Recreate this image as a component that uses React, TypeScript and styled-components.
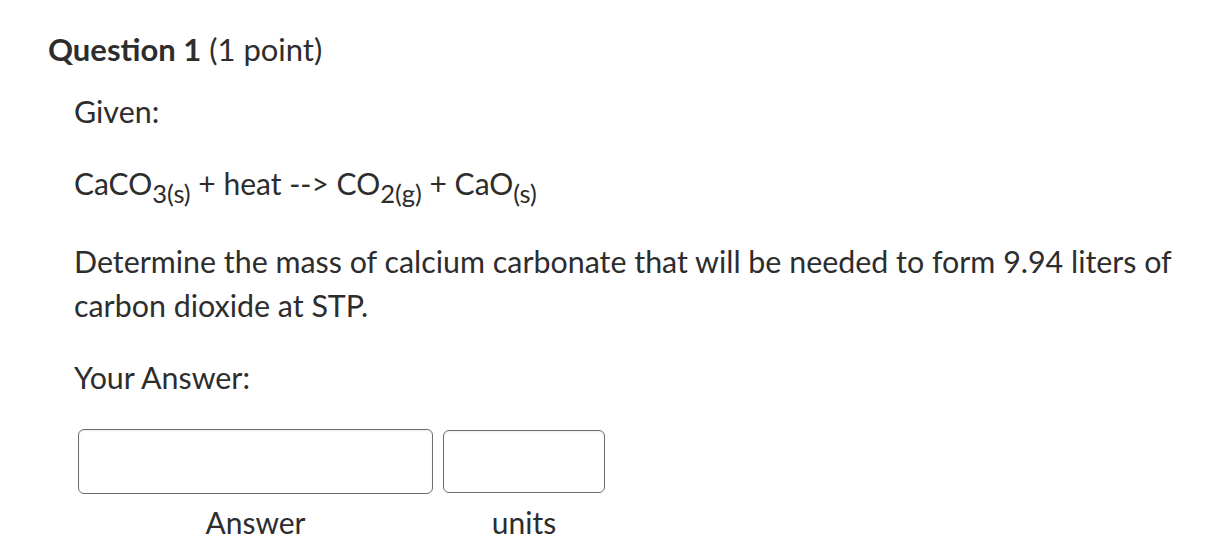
import styled, { createGlobalStyle } from "styled-components";

const GlobalStyle = createGlobalStyle`
  html, body {
    margin: 0;
    padding: 0;
    background: #fff;
  }
  body {
    font-family: Lato, "Liberation Sans", sans-serif;
    color: #2d2d2d;
  }
`;

const App = () => {
  return (
    <>
      <GlobalStyle />
      <StyledPage>
        <StyledTitle>
          <strong>Question 1</strong> (1 point)
        </StyledTitle>
        <StyledBody>
          <StyledPara>Given:</StyledPara>
          <StyledEquation>
            CaCO<StyledSub>3(s)</StyledSub> + heat --&gt; CO<StyledSub>2(g)</StyledSub> + CaO
            <StyledSub>(s)</StyledSub>
          </StyledEquation>
          <StyledPara>
            Determine the mass of calcium carbonate that will be needed to form 9.94 liters of carbon
            dioxide at STP.
          </StyledPara>
          <StyledPara>Your Answer:</StyledPara>
          <StyledAnswerRow>
            <StyledField $width={355}>
              <StyledInput type="text" $height={65} />
              <StyledLabel>Answer</StyledLabel>
            </StyledField>
            <StyledField $width={162}>
              <StyledInput type="text" $height={63} />
              <StyledLabel>units</StyledLabel>
            </StyledField>
          </StyledAnswerRow>
        </StyledBody>
      </StyledPage>
    </>
  );
};

export default App;

const StyledPage = styled.div`
  padding: 27px 0 0 48px;
  width: 1130px;
`;

const StyledTitle = styled.h2`
  margin: 0;
  font-size: 31px;
  font-weight: 400;
  line-height: 44px;

  strong {
    font-weight: 700;
  }
`;

const StyledBody = styled.div`
  padding-left: 26px;
  margin-top: 18px;
`;

const StyledPara = styled.p`
  margin: 0 0 28px;
  font-size: 30.4px;
  line-height: 44px;
`;

const StyledEquation = styled(StyledPara)`
  font-size: 30px;
  margin-bottom: 34px;
`;

const StyledSub = styled.sub`
  font-size: 85%;
  vertical-align: -0.32em;
  line-height: 0;
`;

const StyledAnswerRow = styled.div`
  display: flex;
  align-items: flex-start;
  gap: 10px;
  padding-left: 4px;
  margin-top: 30px;
`;

const StyledField = styled.div<{ $width: number }>`
  width: ${(p) => p.$width}px;
  display: flex;
  flex-direction: column;
  align-items: center;
  gap: 12px;
`;

const StyledInput = styled.input<{ $height: number }>`
  box-sizing: border-box;
  width: 100%;
  height: ${(p) => p.$height}px;
  margin-top: ${(p) => (65 - p.$height) / 2}px;
  margin-bottom: ${(p) => (65 - p.$height) / 2}px;
  border: 1px solid #6b6f73;
  border-radius: 6px;
  box-shadow: inset 0 1px 2px rgba(0, 0, 0, 0.08);
  background: #fff;
  outline: none;
`;

const StyledLabel = styled.span`
  font-size: 30px;
  line-height: 32px;
`;
